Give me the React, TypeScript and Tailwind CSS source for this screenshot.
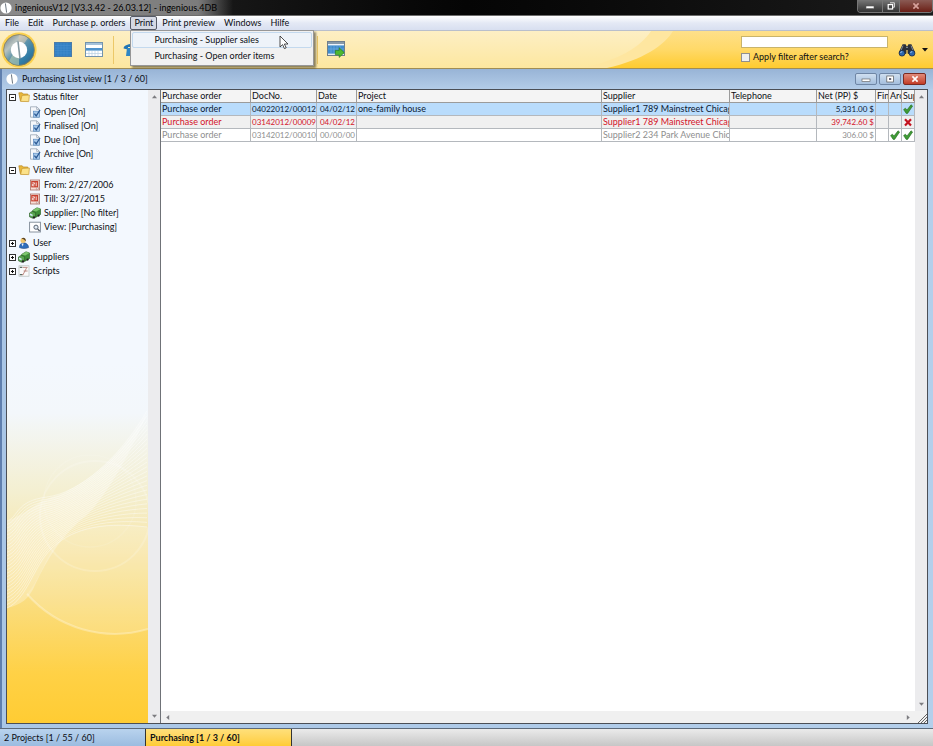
import type { ReactNode } from "react"

const toolMenu = ["File", "Edit", "Purchase p. orders", "Print", "Print preview", "Windows", "Hilfe"]

const printMenu = ["Purchasing - Supplier sales", "Purchasing - Open order items"]

const tree = [
  {
    label: "Status filter",
    icon: <FolderIcon />,
    open: true,
    items: [
      { label: "Open [On]", icon: <DocCheckIcon /> },
      { label: "Finalised [On]", icon: <DocCheckIcon /> },
      { label: "Due [On]", icon: <DocCheckIcon /> },
      { label: "Archive [On]", icon: <DocCheckIcon /> },
    ],
  },
  {
    label: "View filter",
    icon: <FolderIcon />,
    open: true,
    items: [
      { label: "From: 2/27/2006", icon: <CalendarIcon /> },
      { label: "Till: 3/27/2015", icon: <CalendarIcon /> },
      { label: "Supplier: [No filter]", icon: <TruckIcon /> },
      { label: "View: [Purchasing]", icon: <ViewIcon /> },
    ],
  },
  { label: "User", icon: <UserIcon />, open: false, items: [] },
  { label: "Suppliers", icon: <TruckIcon />, open: false, items: [] },
  { label: "Scripts", icon: <ScriptIcon />, open: false, items: [] },
]

const columns = [
  { label: "Purchase order", width: "w-[90px]" },
  { label: "DocNo.", width: "w-[66px]" },
  { label: "Date", width: "w-[40px]" },
  { label: "Project", width: "" },
  { label: "Supplier", width: "w-[128px]" },
  { label: "Telephone", width: "w-[87px]" },
  { label: "Net (PP) $", width: "w-[59px]" },
  { label: "Fin", width: "w-[13px]" },
  { label: "Arc", width: "w-[13px]" },
  { label: "Sup", width: "w-[13px]" },
]

const orders = [
  {
    docNo: "04022012/00012",
    date: "04/02/12",
    project: "one-family house",
    supplier: "Supplier1 789 Mainstreet Chicago",
    net: "5,331.00 $",
    marks: ["", "", "yes"],
    style: "bg-[#b9dcfc] text-[#0c1a33]",
  },
  {
    docNo: "03142012/00009",
    date: "04/02/12",
    project: "",
    supplier: "Supplier1 789 Mainstreet Chicago",
    net: "39,742.60 $",
    marks: ["", "", "no"],
    style: "bg-[#f0f0f0] text-[#d4142a]",
  },
  {
    docNo: "03142012/00010",
    date: "00/00/00",
    project: "",
    supplier: "Supplier2 234 Park Avenue Chicago",
    net: "306.00 $",
    marks: ["", "yes", "yes"],
    style: "bg-white text-[#8e8e8e]",
  },
]

function Logo({ className }: { className: string }) {
  return (
    <svg viewBox="0 0 12 12" className={className} aria-hidden="true">
      <circle cx="6" cy="6" r="5.6" fill="#fff" />
      <path d="M5.4 1.4 6.6 10.6" stroke="#6b7580" strokeWidth="1" fill="none" />
    </svg>
  )
}

function BigLogo() {
  return (
    <svg viewBox="0 0 36 36" className="size-9" aria-hidden="true">
      <defs>
        <linearGradient id="ring" x1="0" y1="0" x2="1" y2="1">
          <stop offset="0" stopColor="#5f7480" />
          <stop offset="0.3" stopColor="#b9c3c0" />
          <stop offset="0.5" stopColor="#5d93ab" />
          <stop offset="0.75" stopColor="#2f7ba6" />
          <stop offset="1" stopColor="#4c5a66" />
        </linearGradient>
      </defs>
      <circle cx="18" cy="18" r="17.6" fill="#fbd04c" />
      <circle cx="18" cy="18" r="15.4" fill="url(#ring)" stroke="#8a7f58" strokeWidth="0.8" />
      <path d="M18 3a15 15 0 0 1 9 3L22 13a8 8 0 0 0-5-2z" fill="#d9c9b4" opacity="0.6" />
      <path d="M8 29a15 15 0 0 0 10 4v-8a8 8 0 0 1-6-3z" fill="#b9cdb0" opacity="0.6" />
      <circle cx="18" cy="18" r="8.2" fill="#fff" />
      <path d="M17 9.4 19 26.6" stroke="#8499a1" strokeWidth="1.6" fill="none" />
    </svg>
  )
}

function FolderIcon() {
  return (
    <svg viewBox="0 0 12 12" className="size-3" aria-hidden="true">
      <path d="M.8 1.8h3.4l1 1.2h4.6v7H2.4z" fill="#e9b93c" stroke="#b98a25" strokeWidth="0.7" />
      <path d="M4 4.4 11.4 4 10.8 10.6 2.6 10.4z" fill="#fbe28a" stroke="#c79a33" strokeWidth="0.7" />
    </svg>
  )
}

function DocCheckIcon() {
  return (
    <svg viewBox="0 0 12 12" className="size-3" aria-hidden="true">
      <path d="M1.5.8h6.2l2.6 2.4v8H1.5z" fill="#f6f8fb" stroke="#97a3b1" strokeWidth="0.8" />
      <path d="M7.6.8v2.6h2.7" fill="none" stroke="#97a3b1" strokeWidth="0.7" />
      <rect x="4.4" y="5.2" width="6" height="6" fill="#a9caeb" stroke="#5c8cc0" strokeWidth="0.7" />
      <path d="M5.4 7.6 7.2 9.8 11 4" fill="none" stroke="#2c5a94" strokeWidth="1.3" />
    </svg>
  )
}

function CalendarIcon() {
  return (
    <svg viewBox="0 0 12 12" className="size-3" aria-hidden="true">
      <rect x="1.4" y="1" width="9.2" height="10" fill="#f7ded7" stroke="#a9726a" strokeWidth="0.8" />
      <rect x="2.2" y="2" width="7" height="6.4" fill="#c8402f" />
      <path d="M3.4 3.8h2v1.4h-2v1.6h2M7.2 3.4v3.8" stroke="#fff" strokeWidth="0.8" fill="none" />
      <path d="M7.4 11v-2.2h3.2z" fill="#fff" stroke="#a9726a" strokeWidth="0.5" />
    </svg>
  )
}

function TruckIcon() {
  return (
    <svg viewBox="0 0 12 12" className="size-3" aria-hidden="true">
      <path d="M3.6 3.4 8 .8l3.6 1.2v5.4L7 10.2 3.6 8.6z" fill="#3f8f3a" stroke="#24551f" strokeWidth="0.6" />
      <path d="M3.6 3.4 8 .8l3.6 1.2L7.2 4.6z" fill="#7cc56e" />
      <path d="M.5 6 3 4.4l3.6 1.2v4.6L3.6 11.2.5 9.8z" fill="#5aa552" stroke="#24551f" strokeWidth="0.6" />
      <path d="M1 6.4 3.6 7.4v1.8L1 8.2z" fill="#cfe6f2" />
      <circle cx="5" cy="10.4" r="1.2" fill="#222" />
      <circle cx="9.6" cy="8.6" r="1.1" fill="#222" />
    </svg>
  )
}

function ViewIcon() {
  return (
    <svg viewBox="0 0 12 12" className="size-3" aria-hidden="true">
      <rect x="0.6" y="1.2" width="10.8" height="9.8" fill="#fff" stroke="#7d8794" strokeWidth="0.9" />
      <circle cx="7" cy="6.2" r="2.1" fill="#e4eef7" stroke="#4b5563" strokeWidth="0.9" />
      <path d="m8.6 7.8 2 2.2" stroke="#4b5563" strokeWidth="1.2" />
    </svg>
  )
}

function UserIcon() {
  return (
    <svg viewBox="0 0 12 12" className="size-3" aria-hidden="true">
      <path d="M1.4 10.6c0-3 1.6-4.8 4.2-4.8s5 2 5 4.8c-2.6 1.2-6.6 1.2-9.2 0z" fill="#2f6fbd" stroke="#1c3f70" strokeWidth="0.5" />
      <path d="M3.4 6.4h2.2L4.8 9.6z" fill="#f4f4f4" />
      <circle cx="5" cy="3.6" r="2.5" fill="#f0c66c" />
      <path d="M3.4 1.6C5.4-.4 8.6 1 7.6 4.6 6.8 3 5.4 2 3.4 1.6z" fill="#5b4322" />
    </svg>
  )
}

function ScriptIcon() {
  return (
    <svg viewBox="0 0 12 12" className="size-3" aria-hidden="true">
      <rect x="1" y="0.8" width="10" height="10.4" fill="#fafafa" stroke="#b5bcb9" strokeWidth="0.7" />
      <path d="M1.8 2.4h2.6M1.8 9.6h2.6" stroke="#5c6f66" strokeWidth="1.1" />
      <path d="M5 2.4h4.6M5 9.6 7 6l1.6-3.2M5.6 6h4M4 9.6h1.4" stroke="#b0746a" strokeWidth="0.8" fill="none" />
    </svg>
  )
}

function CheckIcon() {
  return (
    <svg viewBox="0 0 10 10" className="size-[10px]" aria-label="yes">
      <path d="M.6 5.6 2.4 4.2 4 6 8 .8 9.6 2 4.6 9.4 3.2 9.4z" fill="#3f9b35" stroke="#23691e" strokeWidth="0.6" />
    </svg>
  )
}

function CrossIcon() {
  return (
    <svg viewBox="0 0 10 10" className="size-[10px]" aria-label="no">
      <path d="M2 2.2 8 8.4M8 2.2 2 8.4" stroke="#c3121f" strokeWidth="2.2" />
    </svg>
  )
}

function GridIcon() {
  return (
    <svg viewBox="0 0 18 15" className="h-[15px] w-[18px]" aria-hidden="true">
      <rect x="0.5" y="0.5" width="17" height="14" fill="#3380c4" stroke="#4a7ba8" />
      <path d="M1 3.5h16M1 6h16M1 8.5h16M1 11h16M4 1v13M7 1v13M10 1v13M13 1v13" stroke="#4a91d0" strokeWidth="0.5" />
    </svg>
  )
}

function SplitGridIcon() {
  return (
    <svg viewBox="0 0 18 15" className="h-[15px] w-[18px]" aria-hidden="true">
      <rect x="0.5" y="0.5" width="17" height="14" fill="#fff" stroke="#7393ad" />
      <rect x="1" y="1" width="16" height="2" fill="#a5c2da" />
      <rect x="1" y="6" width="16" height="2.6" fill="#4f93cc" />
      <path d="M1 11.5h16M4 9v5M7 9v5M10 9v5M13 9v5" stroke="#b7cfe2" strokeWidth="0.7" />
    </svg>
  )
}

function ExportIcon() {
  return (
    <svg viewBox="0 0 18 17" className="h-[17px] w-[18px]" aria-hidden="true">
      <rect x="0.5" y="0.5" width="17" height="14" fill="#3f8ccd" stroke="#6f7f8c" />
      <rect x="1" y="1" width="16" height="2" fill="#8799a8" />
      <rect x="1" y="3" width="16" height="1.4" fill="#eef4fa" />
      <path d="M1 8h16M4 5v7M7 5v7M10 5v7M13 5v7" stroke="#7db4e2" strokeWidth="0.5" />
      <rect x="1" y="12.6" width="16" height="1.4" fill="#e3ebf2" />
      <path d="M8.4 9.4h3.8V6.8l5 4.8-5 4.8v-2.6H8.4z" fill="#4cb82f" stroke="#2b7f1a" strokeWidth="0.7" />
    </svg>
  )
}

function PhoneIcon() {
  return (
    <svg viewBox="0 0 18 15" className="h-[15px] w-[18px]" aria-hidden="true">
      <path d="M.6 6.6C.4.4 17.6.4 17.4 6.6L13 7.4V5H5v2.4z" fill="#2176b5" />
      <path d="M4 6h10l1 8H3z" fill="#2f86c4" />
    </svg>
  )
}

function BinocularsIcon() {
  return (
    <svg viewBox="0 0 18 14" className="h-[14px] w-[18px]" aria-hidden="true">
      <path d="M4.6 1.2h3l1 2h.8l1-2h3l3.6 8-3 3.4-4.4-2V7H8.4v3.6L4 12.6.8 9.4z" fill="#2b2f38" />
      <path d="M5 2.6 3 7.4M13 2.6l2 4.8M8 4.4h2" stroke="#8c97a8" strokeWidth="0.9" fill="none" />
      <circle cx="4" cy="10.2" r="2.9" fill="#2c66ae" stroke="#1c2a40" strokeWidth="0.8" />
      <circle cx="14" cy="10.2" r="2.9" fill="#2c66ae" stroke="#1c2a40" strokeWidth="0.8" />
      <path d="M2.6 10a1.6 1.6 0 0 1 1.6-1.4M12.6 10a1.6 1.6 0 0 1 1.6-1.4" stroke="#a9cdf2" strokeWidth="0.9" fill="none" />
    </svg>
  )
}

function Arrow({ dir }: { dir: "up" | "down" | "left" | "right" }) {
  const paths = { up: "M0 5 3 1.5 6 5z", down: "M0 1 3 4.5 6 1z", left: "M5 0 1.5 3 5 6z", right: "M1 0 4.5 3 1 6z" }
  return (
    <svg viewBox="0 0 6 6" className="size-[5px]" aria-hidden="true">
      <path d={paths[dir]} fill="#7c7c80" />
    </svg>
  )
}

function Scrollbar() {
  return (
    <div className="flex w-3 shrink-0 flex-col items-center justify-between bg-[#ececee] py-1">
      <Arrow dir="up" />
      <Arrow dir="down" />
    </div>
  )
}

// line fan between the upper and the lower edge of the wave
function Waves() {
  const upper = [140, 2, 112, 50, 72, 84, 40, 88, 20, 104, 12, 108, 0, 112]
  const lower = [140, 118, 90, 112, 62, 122, 44, 140, 34, 168, 20, 190, 0, 199]
  const lines = Array.from({ length: 26 }, (_, i) => {
    const p = upper.map((u, k) => u + ((lower[k] - u) * i) / 25)
    return `M${p[0]} ${p[1]}C${p[2]} ${p[3]} ${p[4]} ${p[5]} ${p[6]} ${p[7]}S${p[10]} ${p[11]} ${p[12]} ${p[13]}`
  })
  return (
    <svg viewBox="0 0 141 314" className="absolute bottom-0 left-0 w-full" aria-hidden="true">
      <path d="M141 2C112 50 82 72 52 86 32 90 18 106 0 112V199C14 196 22 190 28 176 40 150 56 124 80 106 100 86 126 40 141 2z" fill="#fff" opacity="0.28" />
      <g fill="none" stroke="#fff">
        {lines.map((d) => (
          <path key={d} d={d} strokeWidth="0.8" opacity="0.5" />
        ))}
        <circle cx="88" cy="107" r="55" strokeWidth="2" opacity="0.18" />
        <circle cx="83" cy="92" r="46" strokeWidth="1.5" opacity="0.1" />
      </g>
      <path d="M20 185A117 117 0 0 0 141 220V118C100 112 70 116 50 134 38 150 32 172 20 185z" fill="#fff" opacity="0.14" />
      <path d="M20 185A117 117 0 0 0 141 220" fill="none" stroke="#fff" strokeWidth="2" opacity="0.3" />
    </svg>
  )
}

function CaptionButton({ label, className, children }: { label: string; className: string; children: ReactNode }) {
  return (
    <button type="button" aria-label={label} className={`flex items-center justify-center ${className}`}>
      {children}
    </button>
  )
}

function MinIcon() {
  return (
    <svg viewBox="0 0 10 8" className="h-2 w-[10px]" aria-hidden="true">
      <rect x="1" y="4" width="8" height="2.6" fill="#fff" stroke="#555" strokeWidth="0.6" />
    </svg>
  )
}

function MaxIcon() {
  return (
    <svg viewBox="0 0 10 8" className="h-2 w-[10px]" aria-hidden="true">
      <rect x="1.8" y="1" width="6.6" height="6" fill="#fff" stroke="#555" strokeWidth="0.7" />
      <rect x="4" y="3" width="2.2" height="2" fill="#667" />
    </svg>
  )
}

function RestoreIcon() {
  return (
    <svg viewBox="0 0 10 8" className="h-2 w-[10px]" aria-hidden="true">
      <path d="M4 .8h4.4v4.4H7" fill="none" stroke="#ddd" strokeWidth="1" />
      <rect x="2.2" y="2.6" width="4.4" height="4.4" fill="#444" stroke="#fff" strokeWidth="1.2" />
    </svg>
  )
}

function CloseIcon({ color }: { color: string }) {
  return (
    <svg viewBox="0 0 10 8" className="h-2 w-[10px]" aria-hidden="true">
      <path d="m2.4 1.4 5.2 5.2M7.6 1.4 2.4 6.6" stroke={color} strokeWidth="1.6" />
    </svg>
  )
}

function TitleBar() {
  return (
    <header className="flex h-4 shrink-0 items-start justify-between border-b border-[#6d6d6d] bg-linear-to-r from-[#2a2a2a] via-[#050505] to-[#1c1c1c]">
      <div className="flex h-[15px] items-center gap-[3px] bg-linear-to-r from-[#8a8a8a] via-[#7c7c7c] via-85% to-transparent pr-4">
        <Logo className="size-3" />
        <h1 className="text-black">ingeniousV12 [V3.3.42 - 26.03.12] - ingenious.4DB</h1>
      </div>
      <div className="flex h-[13px] overflow-hidden rounded-b-sm border border-t-0 border-[#777]">
        <CaptionButton label="Minimize" className="w-6 bg-linear-to-b from-[#777] to-[#333]"><MinIcon /></CaptionButton>
        <CaptionButton label="Restore" className="w-[18px] border-x border-[#777] bg-linear-to-b from-[#777] to-[#333]"><RestoreIcon /></CaptionButton>
        <CaptionButton label="Close" className="w-8 bg-linear-to-b from-[#8a5a54] to-[#6a1d15]"><CloseIcon color="#d7a29c" /></CaptionButton>
      </div>
    </header>
  )
}

function MenuBar() {
  return (
    <nav className="flex h-[15px] shrink-0 items-stretch gap-px border-b border-[#b9bfcc] bg-linear-to-b from-white via-[#e4e9f5] to-[#d8dff0] pl-px">
      {toolMenu.map((label) => (
        <div key={label} className="relative flex">
          <button
            type="button"
            className={
              label === "Print"
                ? "rounded-xs border border-[#555a66] bg-[#d5d9e4] px-[3px] leading-3"
                : "px-1 leading-[14px]"
            }
          >
            {label}
          </button>
          {label === "Print" && <PrintMenu />}
        </div>
      ))}
    </nav>
  )
}

function PrintMenu() {
  return (
    <div className="absolute top-full left-0 z-10 w-[184px] border border-[#979797] bg-[#f1f1f1] p-px shadow-[2px_2px_2px_rgba(0,0,0,0.45)]">
      {printMenu.map((label, i) => (
        <button
          key={label}
          type="button"
          className={`block h-4 w-full rounded-xs border pl-[21px] text-left leading-[14px] ${
            i === 0 ? "border-[#c3d9ee] bg-[#eef3f9]" : "border-transparent"
          }`}
        >
          {label}
        </button>
      ))}
      <svg viewBox="0 0 10 15" className="absolute top-1 right-6 h-[15px] w-[10px]" aria-hidden="true">
        <path d="M1 1v11l2.6-2.4 1.8 4 1.8-.8-1.8-3.8H9z" fill="#fff" stroke="#222" strokeWidth="0.8" />
      </svg>
    </div>
  )
}

function Toolbar() {
  return (
    <div className="relative flex h-[38px] shrink-0 items-center justify-between border-b border-[#a08d55] bg-linear-to-b from-[#fdefc4] to-[#fde79f] pr-[5px]">
      <svg viewBox="0 0 350 38" preserveAspectRatio="none" className="absolute top-0 right-0 h-full w-[350px]" aria-hidden="true">
        <defs>
          <linearGradient id="gold" x1="0" y1="0" x2="0" y2="1">
            <stop offset="0" stopColor="#fee08a" />
            <stop offset="0.5" stopColor="#ffd968" />
            <stop offset="1" stopColor="#ffcb2f" />
          </linearGradient>
        </defs>
        <path d="M0 38C36 30 58 16 68 0H350V38z" fill="#fee6a0" />
        <path d="M24 38C60 30 82 14 90 0H350V38z" fill="url(#gold)" />
      </svg>
      <div className="flex items-center">
        <button type="button" aria-label="Ingenious" className="ml-px"><BigLogo /></button>
        <button type="button" aria-label="List" className="ml-[17px]"><GridIcon /></button>
        <button type="button" aria-label="Split list" className="ml-[13px]"><SplitGridIcon /></button>
        <div className="ml-[10px] h-7 w-px bg-[#ecc868]" />
        <button type="button" aria-label="Phone" className="ml-[9px]"><PhoneIcon /></button>
        <div className="ml-[176px] h-7 w-px bg-[#ecc868]" />
        <button type="button" aria-label="Export" className="ml-[9px]"><ExportIcon /></button>
      </div>
      <div className="relative flex items-center gap-[10px]">
        <div className="flex flex-col gap-[3px]">
          <input aria-label="Search" className="h-3 w-[147px] border border-[#c9b46a] bg-white px-1" />
          <label className="flex items-center gap-[3px] leading-3">
            <input type="checkbox" className="size-[9px] appearance-none border border-[#8f8f8f] bg-[#eef0f0]" />
            Apply filter after search?
          </label>
        </div>
        <button type="button" aria-label="Find" className="flex items-center gap-[6px]">
          <BinocularsIcon />
          <svg viewBox="0 0 6 4" className="h-1 w-[6px]" aria-hidden="true"><path d="M0 0h6L3 3.4z" fill="#111" /></svg>
        </button>
      </div>
    </div>
  )
}

function Sidebar() {
  return (
    <aside className="flex w-[154px] shrink-0 border-r border-[#6f7277]">
      <div className="relative min-w-0 flex-1 bg-[linear-gradient(to_top,#ffcc33_0,#ffd146_50px,#fbdb76_110px,#f8e6a8_170px,#f4efd0_230px,#f3f7fb_310px,#f3f8fe_360px)]">
        <Waves />
        <ul className="relative pl-px">
          {tree.map((node) => (
            <li key={node.label}>
              <div className="flex h-[14px] items-center">
                <button type="button" aria-label={node.label} className="flex size-[9px]">
                  <svg viewBox="0 0 9 9" className="size-[9px]" aria-hidden="true">
                    <rect x="1.5" y="1.5" width="6" height="6" fill="#fff" stroke="#333" />
                    <path d={node.open ? "M3 4.5h3" : "M3 4.5h3M4.5 3v3"} stroke="#111" />
                  </svg>
                </button>
                <span className="mr-[3px] ml-px">{node.icon}</span>
                {node.label}
              </div>
              {node.items.length > 0 && (
                <ul className="pt-px pb-[2px] pl-[21px]">
                  {node.items.map((item) => (
                    <li key={item.label} className="flex h-[14px] items-center gap-[3px] whitespace-nowrap">
                      {item.icon}
                      {item.label}
                    </li>
                  ))}
                </ul>
              )}
            </li>
          ))}
        </ul>
      </div>
      <Scrollbar />
    </aside>
  )
}

function OrderTable() {
  const cell = "h-[13px] overflow-hidden border-r border-b border-[#b4b8bd] px-px leading-3 whitespace-nowrap"
  return (
    <table className="w-full table-fixed border-separate border-spacing-0">
      <thead>
        <tr className="bg-[#f4f4f4]">
          {columns.map((col) => (
            <th key={col.label} className={`h-[13px] overflow-hidden border-r border-b border-[#9b9b9b] px-px text-left leading-3 font-normal whitespace-nowrap ${col.width}`}>
              {col.label}
            </th>
          ))}
        </tr>
      </thead>
      <tbody>
        {orders.map((order) => (
          <tr key={order.docNo} className={order.style}>
            <td className={cell}>Purchase order</td>
            <td className={`${cell} text-[8px]`}>{order.docNo}</td>
            <td className={`${cell} text-right text-[8px]`}>{order.date}</td>
            <td className={cell}>{order.project}</td>
            <td className={cell}>{order.supplier}</td>
            <td className={cell}></td>
            <td className={`${cell} text-right text-[8px]`}>{order.net}</td>
            {order.marks.map((mark, i) => (
              <td key={i} className="h-[13px] border-r border-b border-[#b4b8bd] pl-px">
                {mark === "yes" && <CheckIcon />}
                {mark === "no" && <CrossIcon />}
              </td>
            ))}
          </tr>
        ))}
      </tbody>
    </table>
  )
}

function ListWindow() {
  return (
    <main className="flex min-h-0 flex-1 flex-col border-l-2 border-[#5f7fae] bg-linear-to-r from-[#a9c6e6] to-[#b4cfeb] pr-[5px] pb-1 pl-1">
      <div className="-mr-[5px] -ml-1 flex h-5 shrink-0 items-center justify-between bg-linear-to-b from-[#98b4d6] to-[#b3cce8] pr-[7px] pl-1">
        <div className="flex items-center gap-1">
          <Logo className="size-3" />
          <h2>Purchasing List view [1 / 3 / 60]</h2>
        </div>
        <div className="flex h-3 gap-[2px]">
          <CaptionButton label="Minimize window" className="w-[22px] rounded-xs border border-[#6f86a5] bg-linear-to-b from-[#cfdff0] to-[#a5bfdd]"><MinIcon /></CaptionButton>
          <CaptionButton label="Maximize window" className="w-[22px] rounded-xs border border-[#6f86a5] bg-linear-to-b from-[#cfdff0] to-[#a5bfdd]"><MaxIcon /></CaptionButton>
          <CaptionButton label="Close window" className="w-[23px] rounded-xs border border-[#7a2b22] bg-linear-to-b from-[#e08a7a] to-[#c23a24]"><CloseIcon color="#fff" /></CaptionButton>
        </div>
      </div>
      <div className="flex min-h-0 flex-1 border border-[#4b4f56] bg-white">
        <Sidebar />
        <section className="flex min-w-0 flex-1 flex-col">
          <div className="flex min-h-0 flex-1">
            <div className="min-w-0 flex-1">
              <OrderTable />
            </div>
            <Scrollbar />
          </div>
          <div className="flex h-3 shrink-0 items-center bg-[#f0f0f0]">
            <div className="flex flex-1 items-center justify-between px-1">
              <Arrow dir="left" />
              <Arrow dir="right" />
            </div>
            <svg viewBox="0 0 12 12" className="size-3" aria-hidden="true">
              <path d="M3 12 12 3M6 12l6-6M9 12l3-3" stroke="#555" strokeWidth="0.9" />
            </svg>
          </div>
        </section>
      </div>
    </main>
  )
}

export default function App() {
  return (
    <div className="flex h-screen flex-col overflow-hidden bg-[#e6e6e6] font-[Lato,'Open_Sans',sans-serif] text-[9px] leading-3 text-[#0c0f14]">
      <TitleBar />
      <MenuBar />
      <Toolbar />
      <ListWindow />
      <footer className="flex h-[18px] shrink-0 border-t border-[#5d6a7a] bg-linear-to-b from-[#ebebeb] to-[#c6c6c6]">
        <button type="button" className="w-[146px] border-r border-[#333] bg-linear-to-b from-[#b9d3ee] to-[#9bbce0] pl-1 text-left">
          2 Projects [1 / 55 / 60]
        </button>
        <button type="button" className="w-[146px] border-r border-[#333] bg-linear-to-b from-[#ffe07a] to-[#ffcc33] pl-1 text-left font-bold">
          Purchasing [1 / 3 / 60]
        </button>
      </footer>
    </div>
  )
}
